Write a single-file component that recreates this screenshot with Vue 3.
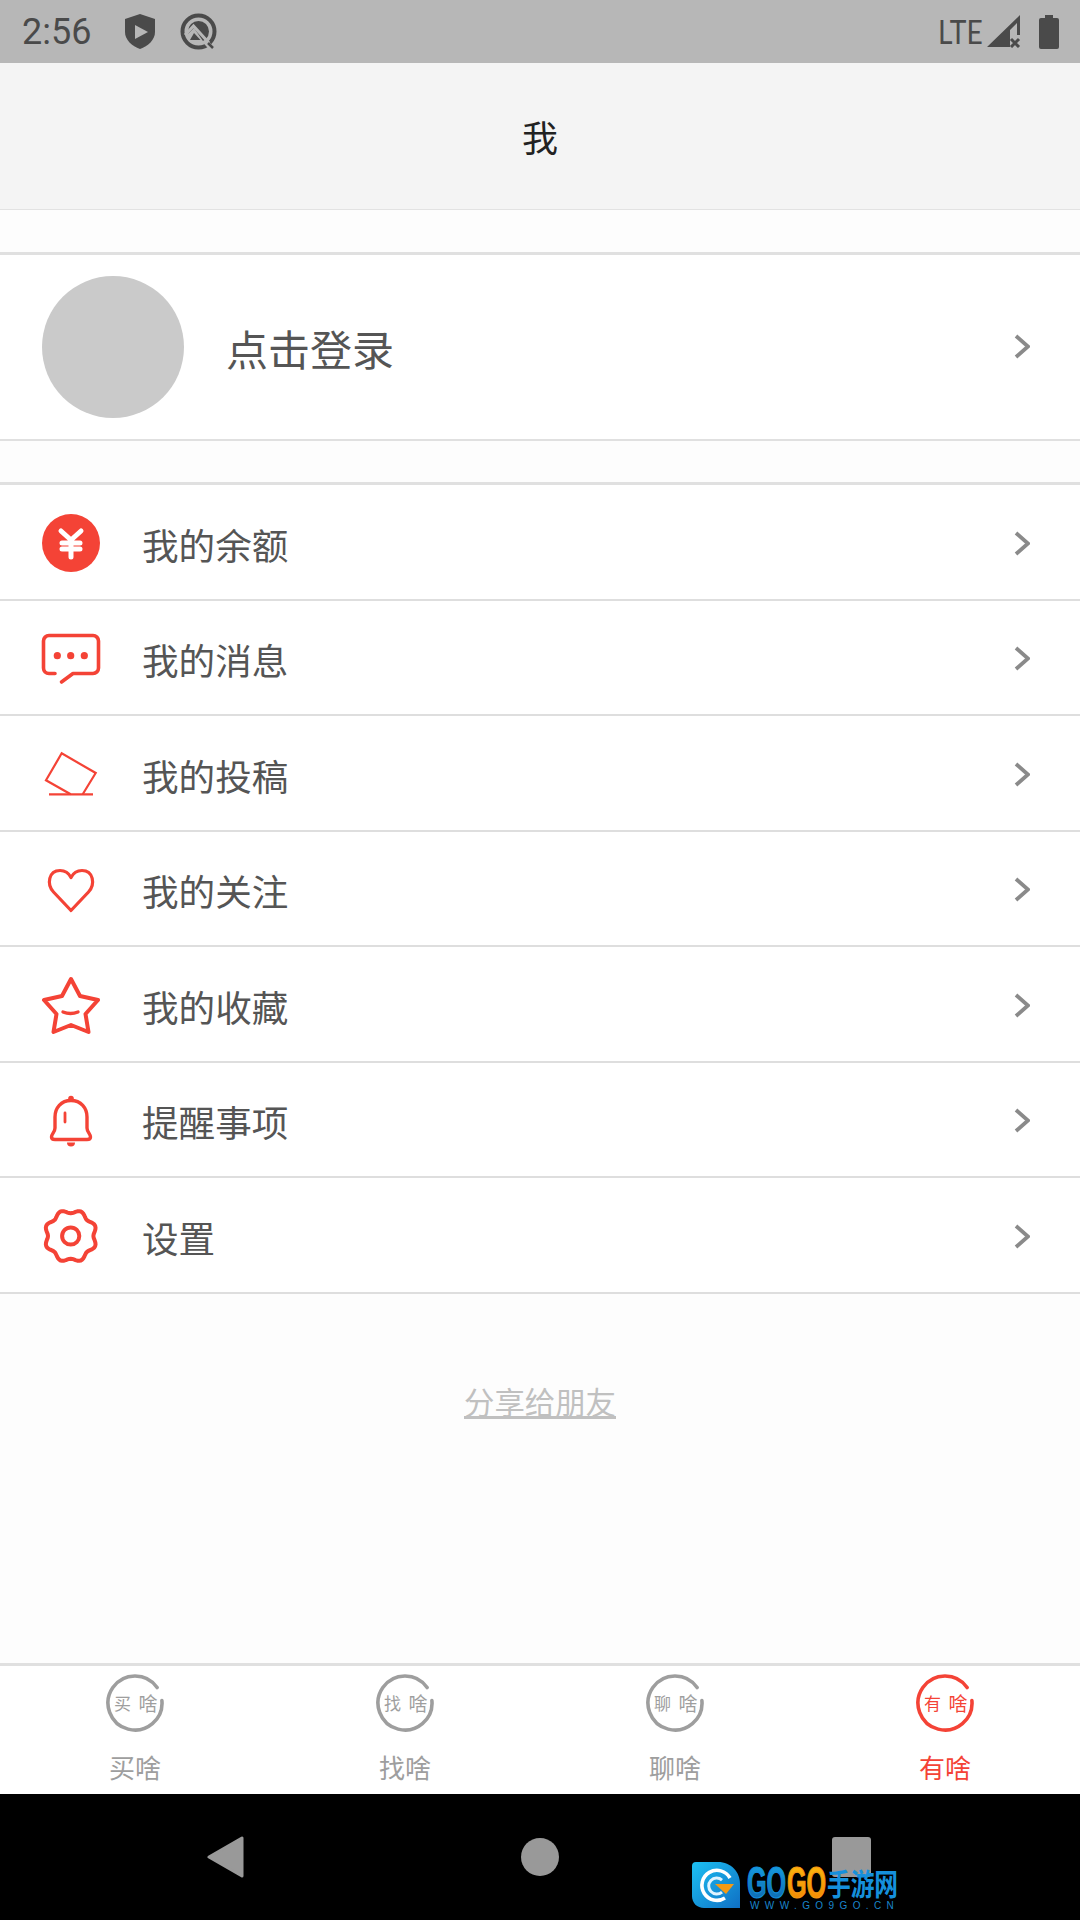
<script setup>
const RED = '#f44336'

const menu = [
  { name: 'yuan', label: '我的余额' },
  { name: 'chat', label: '我的消息' },
  { name: 'post', label: '我的投稿' },
  { name: 'heart', label: '我的关注' },
  { name: 'star', label: '我的收藏' },
  { name: 'bell', label: '提醒事项' },
  { name: 'gear', label: '设置' }
]

const tabs = [
  { label: '买啥', first: '买' },
  { label: '找啥', first: '找' },
  { label: '聊啥', first: '聊' },
  { label: '有啥', first: '有', active: true }
]

// scalloped outline of the settings icon, 8 lobes
function gearPath() {
  const pts = []
  for (let i = 0; i < 96; i++) {
    const a = (i / 96) * Math.PI * 2
    const r = 24.6 + 1.9 * Math.cos(8 * (a - Math.PI / 8))
    pts.push(`${(28.7 + r * Math.cos(a)).toFixed(2)} ${(29 + r * Math.sin(a)).toFixed(2)}`)
  }
  return 'M' + pts.join('L') + 'Z'
}
const gear = gearPath()
</script>

<template>
  <div class="page">
    <div class="status">
      <span class="time">2:56</span>
      <svg class="shield" width="30" height="35" viewBox="0 0 30 35">
        <path d="M15 0 L30 5 V18 C30 26 23 32 15 35 C7 32 0 26 0 18 V5 Z" fill="#4a4a4a" />
        <path d="M10 11 L23 18 L10 25 Z" fill="#b7b7b7" />
      </svg>
      <svg class="qlogo" width="37" height="37" viewBox="0 0 37 37">
        <circle cx="18.5" cy="18.5" r="16" fill="none" stroke="#4a4a4a" stroke-width="4" />
        <circle cx="18.5" cy="18.5" r="10.5" fill="#4a4a4a" />
        <path d="M6 23 L14 31 L25 31 L14 15 Z" fill="#b7b7b7" />
        <path d="M5 22 L13.5 13 L29 30" fill="none" stroke="#b7b7b7" stroke-width="3" />
        <path d="M14 20 L20.5 27 H10 Z" fill="#4a4a4a" />
        <path d="M25 28 L33 37" stroke="#b7b7b7" stroke-width="5" />
        <path d="M28 30 L33 35" stroke="#4a4a4a" stroke-width="2.5" />
      </svg>
      <span class="spacer"></span>
      <span class="lte">LTE</span>
      <svg class="signal" width="34" height="33" viewBox="0 0 34 33">
        <path d="M0 32 L33 0 V20 H30 V8 L23 15 V32 Z" fill="#4a4a4a" />
        <path d="M24 24 L32 32 M32 24 L24 32" stroke="#4a4a4a" stroke-width="3" />
      </svg>
      <svg class="battery" width="20" height="34" viewBox="0 0 20 34">
        <path d="M6 0 H14 V3 H18 Q20 3 20 5 V32 Q20 34 18 34 H2 Q0 34 0 32 V5 Q0 3 2 3 H6 Z" fill="#4a4a4a" />
      </svg>
    </div>

    <div class="header">我</div>

    <div class="content">
      <div class="profile">
        <div class="avatar"></div>
        <span class="login">点击登录</span>
        <svg class="chevron" width="16" height="25" viewBox="0 0 16 25">
          <path d="M2 2 L14 12.5 L2 23" fill="none" stroke="#8a8a8a" stroke-width="3.8" />
        </svg>
      </div>

      <div class="menu">
        <div v-for="item in menu" :key="item.name" class="row">
          <svg class="row-icon" width="58" height="58" viewBox="0 0 58 58" fill="none" :stroke="RED" stroke-linejoin="round" stroke-linecap="round">
            <template v-if="item.name === 'yuan'">
              <circle cx="29" cy="29" r="29" :fill="RED" stroke="none" />
              <path d="M19 17 L29 26 L39 17 M20 29 H38 M20 35 H38 M29 26 V43" stroke="#fff" stroke-width="5" />
            </template>
            <template v-else-if="item.name === 'chat'">
              <path d="M19.5 52 L31 43.5 H51 a5.5 5.5 0 0 0 5.5 -5.5 V11 a5.5 5.5 0 0 0 -5.5 -5.5 H7 a5.5 5.5 0 0 0 -5.5 5.5 V38 a5.5 5.5 0 0 0 5.5 5.5 H13" stroke-width="3.6" />
              <circle cx="15.3" cy="25.7" r="3.6" :fill="RED" stroke="none" />
              <circle cx="28.7" cy="25.7" r="3.6" :fill="RED" stroke="none" />
              <circle cx="42.3" cy="25.7" r="3.6" :fill="RED" stroke="none" />
            </template>
            <template v-else-if="item.name === 'post'">
              <path d="M40.7 49.3 L53.7 28 L19.7 8.3 L4 35.3 L28.7 49.3" stroke-width="2.2" stroke-linecap="butt" stroke-linejoin="miter" />
              <path d="M7 49.3 H51" stroke-width="2.2" stroke-linecap="butt" />
            </template>
            <template v-else-if="item.name === 'heart'">
              <path d="M29 49.5 L11.5 31 C4.5 23.5 6.5 9.5 18 9.5 C23 9.5 27 12.5 29 16.5 C31 12.5 35 9.5 40 9.5 C51.5 9.5 53.5 23.5 46.5 31 Z" stroke-width="3.2" />
            </template>
            <template v-else-if="item.name === 'star'">
              <path d="M29 3 L38 20 L56 24 L43.5 38 L46.5 56 L29 49 L11.5 56 L14.5 38 L2 24 L20 20 Z" stroke-width="4" />
              <path d="M21 36 Q28.5 39 36 36" stroke-width="3.4" />
            </template>
            <template v-else-if="item.name === 'bell'">
              <path d="M29 8.5 C19 8.5 13 16 13 25 V36 C13 40 9.5 42 9.5 45 C9.5 47 11 47.5 13 47.5 H45 C47 47.5 48.5 47 48.5 45 C48.5 42 45 40 45 36 V25 C45 16 39 8.5 29 8.5 Z" stroke-width="3.4" />
              <circle cx="29" cy="6.5" r="2.8" :fill="RED" stroke="none" />
              <path d="M25 50.5 H33 A4 4 0 0 1 25 50.5 Z" :fill="RED" stroke="none" />
              <path d="M23 21 V30" stroke-width="2.8" />
            </template>
            <template v-else>
              <path :d="gear" stroke-width="4" />
              <circle cx="28.7" cy="29" r="8.6" stroke-width="4" />
            </template>
          </svg>
          <span class="row-label">{{ item.label }}</span>
          <svg class="chevron" width="16" height="25" viewBox="0 0 16 25">
            <path d="M2 2 L14 12.5 L2 23" fill="none" stroke="#8a8a8a" stroke-width="3.8" />
          </svg>
        </div>
      </div>

      <div class="share"><span>分享给朋友</span></div>
    </div>

    <div class="tabs">
      <div v-for="tab in tabs" :key="tab.label" :class="['tab', { active: tab.active }]">
        <svg width="58" height="58" viewBox="0 0 58 58">
          <path d="M55.9 26.6 A27 27 0 1 1 51.1 13.5" fill="none" stroke="currentColor" stroke-width="3.6" stroke-linecap="round" />
          <text x="16.5" y="36" text-anchor="middle" font-size="17" fill="currentColor">{{ tab.first }}</text>
          <text x="42" y="37" text-anchor="middle" font-size="19" fill="currentColor">啥</text>
        </svg>
        <span class="tab-label">{{ tab.label }}</span>
      </div>
    </div>

    <div class="nav">
      <svg class="nav-back" width="37" height="42" viewBox="0 0 37 42">
        <path d="M35 2 V40 L2 21 Z" fill="#999" stroke="#999" stroke-width="3" stroke-linejoin="round" />
      </svg>
      <span class="nav-dot"></span>
      <span class="nav-square"></span>

      <svg class="mark" width="216" height="60" viewBox="0 -6 216 60">
        <defs>
          <linearGradient id="logoBlue" x1="0" y1="0" x2="1" y2="1">
            <stop offset="0" stop-color="#1cc0f2" />
            <stop offset="1" stop-color="#0f6fc4" />
          </linearGradient>
          <linearGradient id="textBlue" x1="0" y1="0" x2="0" y2="1">
            <stop offset="0" stop-color="#18a8e8" />
            <stop offset="1" stop-color="#0c5fa8" />
          </linearGradient>
          <linearGradient id="textOrange" x1="0" y1="0" x2="0" y2="1">
            <stop offset="0" stop-color="#ffc010" />
            <stop offset="1" stop-color="#f08000" />
          </linearGradient>
        </defs>
        <path d="M4 2 H26 C39 2 48 12 48 24 V48 H12 C5 48 0 43 0 36 V6 Q0 2 4 2 Z" fill="url(#logoBlue)" />
        <path d="M38 18 A15 15 0 1 0 33 38" fill="none" stroke="#fff" stroke-width="3.6" />
        <path d="M30 20 A8 8 0 1 0 30 32" fill="none" stroke="#dff3ff" stroke-width="3" />
        <path d="M23 24 H42 L34 34 Z" fill="#f59a14" />
        <text class="mark-go" transform="translate(55 38) scale(.56 1)" font-size="45" fill="url(#textBlue)" stroke="#1590dc" stroke-width="1.2">GO</text>
        <text class="mark-go" transform="translate(95 38) scale(.56 1)" font-size="45" fill="url(#textOrange)" stroke="#f59a14" stroke-width="1.2">GO</text>
        <text class="mark-cn" transform="translate(135 35) scale(.79 1)" font-size="30" fill="#1590dc">手游网</text>
        <text class="mark-url" x="58" y="49" font-size="10" fill="#1a86cc">WWW.GO9GO.CN</text>
      </svg>
    </div>
  </div>
</template>

<style>
html, body { margin: 0; padding: 0; }
</style>

<style scoped>
.page {
  width: 1080px; height: 1920px; overflow: hidden;
  display: flex; flex-direction: column;
  background: #fdfdfd;
  font-family: "Noto Sans CJK SC", "Noto Sans", sans-serif;
}
.status {
  height: 63px; flex: none; box-sizing: border-box;
  display: flex; align-items: center;
  padding: 0 21px 0 22px;
  background: #b7b7b7; color: #4a4a4a;
}
.time { font-family: Roboto, sans-serif; font-size: 36px; width: 70px; }
.shield { margin-left: 33px; }
.qlogo { margin-left: 25px; }
.spacer { flex: 1; }
.lte {
  font-family: Lato, sans-serif; font-size: 32px;
  width: 44px; display: inline-block; white-space: nowrap;
  transform: scaleX(.88); transform-origin: left center;
}
.signal { margin-left: 5px; }
.battery { margin-left: 18px; }

.header {
  height: 147px; flex: none; box-sizing: border-box;
  display: flex; align-items: center; justify-content: center;
  background: #f4f4f4; color: #222; font-size: 36px;
  border-bottom: 1px solid #e2e2e2;
}
.content { flex: 1; display: flex; flex-direction: column; }
.profile {
  margin-top: 42px; height: 189px; box-sizing: border-box;
  display: flex; align-items: center;
  padding: 0 50px 0 42px;
  background: #fff;
  border-top: 3px solid #e0e0e0; border-bottom: 2px solid #e0e0e0;
}
.profile .chevron { margin-bottom: 2px; }
.avatar { width: 142px; height: 142px; border-radius: 50%; background: #cacaca; flex: none; }
.login { margin-left: 42px; flex: 1; font-size: 42px; color: #555; }
.menu { margin-top: 41px; background: #fff; border-top: 3px solid #e0e0e0; }
.row {
  height: 115.5px; box-sizing: border-box;
  display: flex; align-items: center;
  padding: 3px 50px 0 42px;
  border-bottom: 2px solid #dedede;
}
.row-icon { flex: none; overflow: visible; }
.row-label { margin-left: 42px; flex: 1; font-size: 36.6px; color: #555; position: relative; top: 1px; }
.share {
  padding-top: 87px; text-align: center;
  font-size: 30.4px; line-height: 40px; color: #c0c0c0;
}
.share span { text-decoration: underline; }

.tabs {
  height: 131px; flex: none; box-sizing: border-box;
  display: flex;
  background: #fff; border-top: 3px solid #e0e0e0;
}
.tab {
  flex: 1; display: flex; flex-direction: column; align-items: center;
  padding-top: 8px; color: #9e9e9e;
}
.tab.active { color: #f44336; }
.tab-label { margin-top: 17px; font-size: 26px; line-height: 36px; }

.nav {
  height: 126px; flex: none; position: relative;
  background: #000;
  display: flex; align-items: center;
  padding: 0 209px 0 207px;
  justify-content: space-between;
}
.nav-back { margin-right: 4px; }
.nav-dot { width: 38px; height: 38px; border-radius: 50%; background: #999; }
.nav-square { width: 39px; height: 40px; border-radius: 3px; background: #999; }
.mark { position: absolute; left: 692px; top: 60px; }
.mark-go { font-family: "Liberation Sans", sans-serif; font-weight: 700; }
.mark-cn { font-family: "Noto Sans CJK SC", sans-serif; font-weight: 700; }
.mark-url { font-family: "Liberation Sans", sans-serif; letter-spacing: 5.4px; }
</style>
